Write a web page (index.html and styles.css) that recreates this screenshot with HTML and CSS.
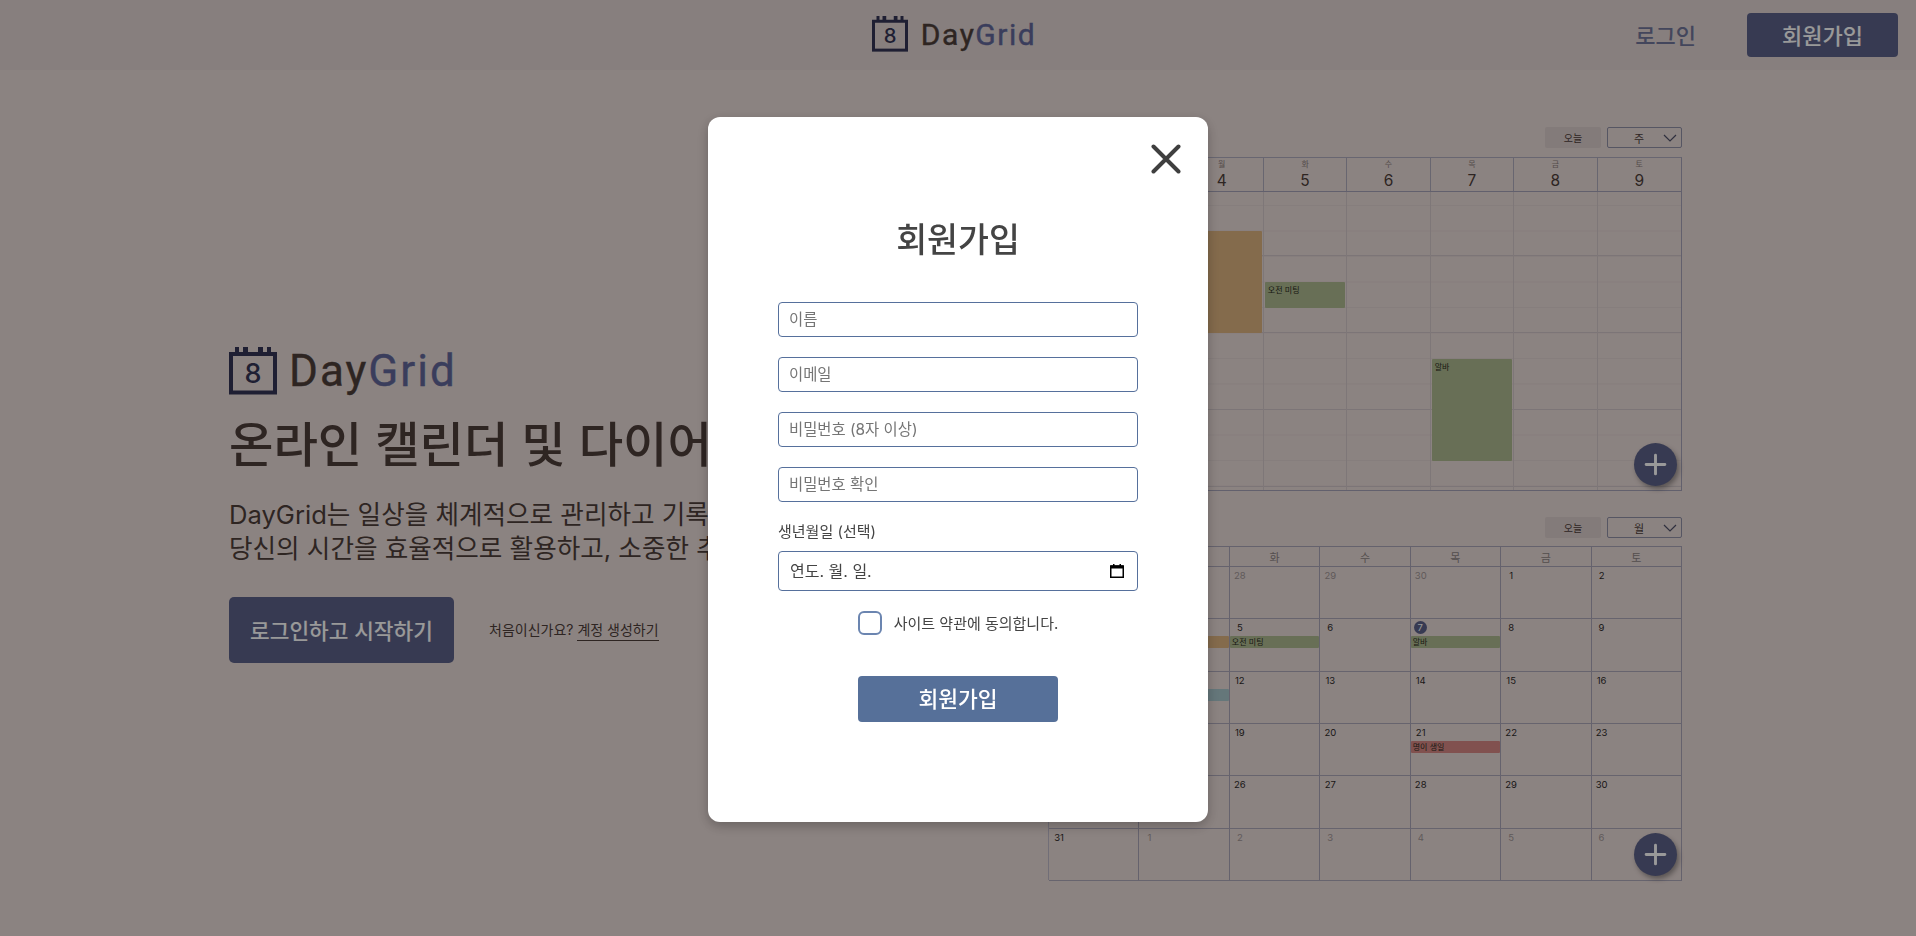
FILE: index.html
```html
<!DOCTYPE html>
<html lang="ko">
<head>
<meta charset="utf-8">
<title>DayGrid</title>
<link rel="stylesheet" href="styles.css">
</head>
<body>
<header class="topbar">
  <a class="logo logo-small">
    <svg class="logo-icon" viewBox="0 0 48 48"><path d="M6 0h4v7H6zM14 0h5v7h-5zM29 0h5v7h-5zM38 0h4v7h-4z" fill="#343555"/><rect x="2" y="7" width="44" height="38.5" fill="none" stroke="#343555" stroke-width="4"/><text x="24" y="36" text-anchor="middle" class="logo-eight">8</text></svg>
    <span class="logo-word"><span class="day">Day</span><span class="grid-word">Grid</span></span>
  </a>
  <nav class="top-actions">
    <a class="top-login">로그인</a>
    <a class="top-signup">회원가입</a>
  </nav>
</header>
<main class="landing">
  <section class="hero">
    <div class="logo logo-large">
      <svg class="logo-icon" viewBox="0 0 48 48"><path d="M6 0h4v7H6zM14 0h5v7h-5zM29 0h5v7h-5zM38 0h4v7h-4z" fill="#343555"/><rect x="2" y="7" width="44" height="38.5" fill="none" stroke="#343555" stroke-width="4"/><text x="24" y="36" text-anchor="middle" class="logo-eight">8</text></svg>
      <span class="logo-word"><span class="day">Day</span><span class="grid-word">Grid</span></span>
    </div>
    <h1 class="hero-title">온라인 캘린더 및 다이어리</h1>
    <p class="hero-text">DayGrid는 일상을 체계적으로 관리하고 기록할 수 있는 서비스입니다.<br>당신의 시간을 효율적으로 활용하고, 소중한 추억을 남겨보세요.</p>
    <div class="hero-actions">
      <a class="hero-cta">로그인하고 시작하기</a>
      <span class="hero-note">처음이신가요? <a class="hero-link">계정 생성하기</a></span>
    </div>
  </section>
  <section class="previews">
    <div class="cal">
      <div class="cal-tools"><span class="today-btn">오늘</span><span class="view-select"><span>주</span><svg class="chev" viewBox="0 0 14 8"><path d="M1 1l6 6 6-6" fill="none" stroke="#4f5068" stroke-width="1.2"/></svg></span></div>
      <div class="week">
        <div class="week-head">
          <div class="wh-day"><small>일</small><b>3</b></div>
          <div class="wh-day"><small>월</small><b>4</b></div>
          <div class="wh-day"><small>화</small><b>5</b></div>
          <div class="wh-day"><small>수</small><b>6</b></div>
          <div class="wh-day"><small>목</small><b>7</b></div>
          <div class="wh-day"><small>금</small><b>8</b></div>
          <div class="wh-day"><small>토</small><b>9</b></div>
        </div>
        <div class="week-body">
          <div class="wb-day"></div>
          <div class="wb-day"><div class="wk-event ev-orange" style="top:39px;height:102px"></div></div>
          <div class="wb-day"><div class="wk-event ev-green" style="top:90px;height:25.5px">오전 미팅</div></div>
          <div class="wb-day"></div>
          <div class="wb-day"><div class="wk-event ev-green" style="top:167px;height:102px">알바</div></div>
          <div class="wb-day"></div>
          <div class="wb-day"></div>
        </div>
        <button class="fab fab-week"><svg viewBox="0 0 24 24"><path d="M12 3v18M3 12h18" stroke="#fff" stroke-width="2.8" stroke-linecap="round"/></svg></button>
      </div>
    </div>
    <div class="cal">
      <div class="cal-tools"><span class="today-btn">오늘</span><span class="view-select"><span>월</span><svg class="chev" viewBox="0 0 14 8"><path d="M1 1l6 6 6-6" fill="none" stroke="#4f5068" stroke-width="1.2"/></svg></span></div>
      <div class="month">
        <div class="mh">일</div><div class="mh">월</div><div class="mh">화</div><div class="mh">수</div><div class="mh">목</div><div class="mh">금</div><div class="mh">토</div>
        <div class="mc off"><span class="num">26</span></div><div class="mc off"><span class="num">27</span></div><div class="mc off"><span class="num">28</span></div><div class="mc off"><span class="num">29</span></div><div class="mc off"><span class="num">30</span></div><div class="mc"><span class="num">1</span></div><div class="mc"><span class="num">2</span></div>
        <div class="mc"><span class="num">3</span></div><div class="mc"><span class="num">4</span><span class="m-event ev-orange"></span></div><div class="mc"><span class="num">5</span><span class="m-event ev-green">오전 미팅</span></div><div class="mc"><span class="num">6</span></div><div class="mc"><span class="today-dot">7</span><span class="m-event ev-green">알바</span></div><div class="mc"><span class="num">8</span></div><div class="mc"><span class="num">9</span></div>
        <div class="mc"><span class="num">10</span></div><div class="mc"><span class="num">11</span><span class="m-event ev-teal"></span></div><div class="mc"><span class="num">12</span></div><div class="mc"><span class="num">13</span></div><div class="mc"><span class="num">14</span></div><div class="mc"><span class="num">15</span></div><div class="mc"><span class="num">16</span></div>
        <div class="mc"><span class="num">17</span></div><div class="mc"><span class="num">18</span></div><div class="mc"><span class="num">19</span></div><div class="mc"><span class="num">20</span></div><div class="mc"><span class="num">21</span><span class="m-event ev-red">명이 생일</span></div><div class="mc"><span class="num">22</span></div><div class="mc"><span class="num">23</span></div>
        <div class="mc"><span class="num">24</span></div><div class="mc"><span class="num">25</span></div><div class="mc"><span class="num">26</span></div><div class="mc"><span class="num">27</span></div><div class="mc"><span class="num">28</span></div><div class="mc"><span class="num">29</span></div><div class="mc"><span class="num">30</span></div>
        <div class="mc"><span class="num">31</span></div><div class="mc off"><span class="num">1</span></div><div class="mc off"><span class="num">2</span></div><div class="mc off"><span class="num">3</span></div><div class="mc off"><span class="num">4</span></div><div class="mc off"><span class="num">5</span></div><div class="mc off"><span class="num">6</span></div>
        <button class="fab fab-month"><svg viewBox="0 0 24 24"><path d="M12 3v18M3 12h18" stroke="#fff" stroke-width="2.8" stroke-linecap="round"/></svg></button>
      </div>
    </div>
  </section>
</main>
<div class="overlay">
  <div class="modal">
    <button class="close" aria-label="닫기"><svg viewBox="0 0 30 30"><path d="M2.500 2.500l25 25M27.500 2.500l-25 25" stroke="#3f3f3f" stroke-width="4" stroke-linecap="round"/></svg></button>
    <h2 class="modal-title">회원가입</h2>
    <form class="form">
      <input class="field" type="text" placeholder="이름">
      <input class="field" type="email" placeholder="이메일">
      <input class="field" type="password" placeholder="비밀번호 (8자 이상)">
      <input class="field" type="password" placeholder="비밀번호 확인">
      <div class="birth">
        <label class="birth-label">생년월일 (선택)</label>
        <div class="date-field"><span>연도. 월. 일.</span><svg class="date-icon" viewBox="0 0 14 14"><path d="M3 0h1.500v2H3zM9.500 0H11v2H9.500z" fill="#000"/><rect x=".75" y="2" width="12.500" height="11.250" fill="none" stroke="#000" stroke-width="1.500"/><rect x=".75" y="1.500" width="12.500" height="3" fill="#000"/></svg></div>
      </div>
      <label class="agree"><span class="check"></span><span class="agree-text">사이트 약관에 동의합니다.</span></label>
      <button class="submit" type="button">회원가입</button>
    </form>
  </div>
</div>
</body>
</html>
```
FILE: styles.css
```css
* { box-sizing: border-box; }
html, body { margin: 0; height: 100%; }
body {
  width: 1916px;
  height: 936px;
  overflow: hidden;
  background: #e8dad7;
  color: #4e3e3a;
  font-family: Inter, "Noto Sans CJK KR", sans-serif;
}
a { color: inherit; text-decoration: none; }

.topbar {
  height: 70px;
  background: #e1d4d2;
  position: relative;
  display: flex;
  align-items: center;
  justify-content: center;
}
.logo { display: flex; align-items: center; }
.logo-icon { display: block; flex: none; }
.logo-eight { font: 500 27px Inter, sans-serif; fill: #343555; }
.logo-word { font-family: Roboto, sans-serif; font-weight: 400; white-space: nowrap; -webkit-text-stroke: .4px currentColor; }
.day { color: #4e3e3a; }
.grid-word { color: #616799; }
.logo-small { gap: 13px; margin: -3px 8px 0 0; }
.logo-small .logo-icon { width: 36px; height: 36px; }
.logo-small .logo-word { font-size: 30px; letter-spacing: 1.500px; padding-top: 2px; }
.logo-large { gap: 12px; }
.logo-large .logo-icon { width: 48px; height: 48px; }
.logo-large .logo-word { font-size: 44px; line-height: 48px; letter-spacing: 2px; }

.top-actions {
  position: absolute;
  right: 18px;
  top: 13px;
  display: flex;
  align-items: center;
  gap: 51px;
}
.top-login { font-size: 22px; font-weight: 500; color: #70759a; padding-bottom: 2px; }
.top-signup {
  width: 151px;
  height: 44px;
  padding-bottom: 2px;
  border-radius: 4px;
  background: #5d6289;
  color: #fff;
  font-size: 22px;
  font-weight: 500;
  display: flex;
  align-items: center;
  justify-content: center;
}

.landing {
  height: 866px;
  padding: 57px 234px 0 229px;
  display: flex;
  justify-content: space-between;
  align-items: flex-start;
}
.hero { margin-top: 220px; width: 479px; }
.hero-title {
  margin: 18px 0 0;
  font-size: 48.300px;
  font-weight: 500;
  line-height: 64px;
  white-space: nowrap;
}
.hero-text {
  margin: 21px 0 0;
  font-size: 25.600px;
  line-height: 34px;
  white-space: nowrap;
}
.hero-actions { margin-top: 31px; display: flex; align-items: center; gap: 35px; }
.hero-cta {
  width: 225px;
  height: 66px;
  padding-bottom: 2px;
  border-radius: 5px;
  background: #5d6289;
  color: #fff;
  font-size: 21.400px;
  font-weight: 500;
  display: flex;
  align-items: center;
  justify-content: center;
}
.hero-note { font-size: 14px; white-space: nowrap; margin-top: -2px; }
.hero-link { border-bottom: 1px solid #4e3e3a; padding-bottom: 2px; }

.previews { width: 634px; display: flex; flex-direction: column; gap: 26px; }
.cal-tools { display: flex; justify-content: flex-end; gap: 6px; height: 21px; margin-bottom: 9px; }
.cal:last-child .cal-tools { margin-bottom: 8px; }
.today-btn {
  width: 56px;
  background: #dbcdcb;
  border-radius: 2px;
  font-size: 10px;
  display: flex;
  align-items: center;
  justify-content: center;
}
.view-select {
  width: 75px;
  border: 1px solid #8f8fa6;
  border-radius: 2px;
  font-size: 11px;
  display: flex;
  align-items: center;
  padding: 0 4px 0 26px;
  justify-content: space-between;
}
.chev { width: 14px; height: 8px; }

.week {
  position: relative;
  margin-left: 49px;
  width: 585px;
  border-right: 1px solid #a4a1b6;
  border-bottom: 1px solid #a4a1b6;
  border-top: 1px solid #aeabbd;
}
.week-head { display: grid; grid-template-columns: repeat(7, 1fr); height: 34px; border-bottom: 1px solid #a4a1b6; }
.wh-day {
  display: flex;
  flex-direction: column;
  align-items: center;
  border-right: 1px solid #aeaabb;
  padding-top: 1px;
}
.wh-day:last-child { border-right: 0; }
.wh-day small { font-size: 8px; line-height: 11px; color: #8d807c; }
.wh-day b { font-size: 15.500px; line-height: 20px; font-weight: 400; margin-top: 1px; }
.week-body {
  display: grid;
  grid-template-columns: repeat(7, 1fr);
  height: 298px;
  background-image:
    linear-gradient(#cfc4c6 1px, transparent 1px),
    linear-gradient(#dfd2d0 1px, transparent 1px);
  background-size: 100% 77px, 100% 25.5px;
  background-position: 0 63px, 0 13px;
}
.wb-day { position: relative; border-right: 1px solid #d2c7c8; }
.wb-day:last-child { border-right: 0; }
.wk-event {
  position: absolute;
  left: 1px;
  right: 1px;
  padding: 3px 3px;
  font-size: 8px;
  line-height: 10px;
  color: #2b2b22;
  border-radius: 1px;
}
.ev-orange { background: #dcb27f; }
.ev-green { background: #adb98f; }
.ev-teal { background: #a8c6cc; }
.ev-red { background: #d88884; }

.month {
  position: relative;
  display: grid;
  grid-template-columns: repeat(7, 1fr);
  grid-template-rows: 20px repeat(6, 52.33px);
  border-top: 1px solid #a9a4b6;
  border-left: 1px solid #bcb7c7;
  height: 334px;
  font-size: 9.500px;
}
.mh {
  display: flex;
  align-items: center;
  justify-content: center;
  font-size: 11px;
  color: #8d8484;
  border-right: 1px solid #a9a4b6;
  border-bottom: 1px solid #a9a4b6;
}
.mc {
  padding: 3px 0 0 0;
  line-height: 11px;
  color: #2e2a2a;
  border-right: 1px solid #a9a4b6;
  border-bottom: 1px solid #aca7b8;
  position: relative;
}
.num { display: block; width: 20px; text-align: center; }
.mc.off { color: #a09696; }
.today-dot {
  position: absolute;
  top: 2px;
  left: 3px;
  width: 13px;
  height: 13px;
  border-radius: 50%;
  background: #5d6289;
  color: #fff;
  display: flex;
  align-items: center;
  justify-content: center;
}
.m-event {
  position: absolute;
  left: 0;
  right: 0;
  top: 17px;
  height: 12px;
  border-radius: 1px;
  font-size: 8px;
  line-height: 12px;
  padding-left: 2px;
  color: #2b2b22;
}
.fab {
  position: absolute;
  width: 43px;
  height: 43px;
  border: 0;
  padding: 9px;
  border-radius: 50%;
  background: #5d6289;
  box-shadow: 2px 3px 5px rgba(0, 0, 0, .35);
}
.fab-week { right: 4px; bottom: 4px; }
.fab-month { right: 5px; bottom: 4px; }
.fab svg { display: block; width: 100%; height: 100%; }

.overlay {
  position: fixed;
  inset: 0;
  background: rgba(0, 0, 0, .4);
  display: flex;
  justify-content: center;
  align-items: flex-start;
  padding-top: 117px;
}
.modal {
  position: relative;
  width: 500px;
  height: 705px;
  background: #fff;
  border-radius: 12px;
  box-shadow: 0 4px 12px rgba(0, 0, 0, .25);
  padding: 100px 70px 0;
  color: #444;
}
.close {
  position: absolute;
  top: 27px;
  right: 27px;
  width: 30px;
  height: 30px;
  padding: 0;
  border: 0;
  background: none;
}
.close svg { display: block; width: 100%; height: 100%; }
.modal-title {
  margin: 0 0 39px;
  text-align: center;
  font-size: 33.600px;
  font-weight: 500;
  line-height: 46px;
}
.form { display: flex; flex-direction: column; gap: 20px; }
.field {
  height: 35px;
  border: 1px solid #56709c;
  border-radius: 4px;
  padding: 0 10px 1px;
  font: 15.400px Inter, "Noto Sans CJK KR", sans-serif;
  outline: none;
}
.field::placeholder { color: #757575; }
.birth { margin-top: -2px; }
.birth-label { display: block; font-size: 15px; line-height: 22px; margin: 1px 0 8px; }
.date-field {
  height: 40px;
  border: 1px solid #56709c;
  border-radius: 4px;
  padding: 0 13px 2px 11px;
  font-size: 16px;
  display: flex;
  align-items: center;
  justify-content: space-between;
}
.date-icon { width: 14px; height: 14px; margin-top: 2px; }
.agree {
  display: flex;
  align-items: center;
  justify-content: center;
  gap: 12px;
  font-size: 15px;
}
.agree-text { margin-top: -2px; }
.check {
  width: 24px;
  height: 24px;
  border: 2px solid #6b85b0;
  border-radius: 6px;
}
.submit {
  align-self: center;
  width: 200px;
  height: 46px;
  margin-top: 21px;
  padding: 0 0 3px;
  border: 0;
  border-radius: 4px;
  background: #567099;
  color: #fff;
  font: 500 21.500px Inter, "Noto Sans CJK KR", sans-serif;
}
```
